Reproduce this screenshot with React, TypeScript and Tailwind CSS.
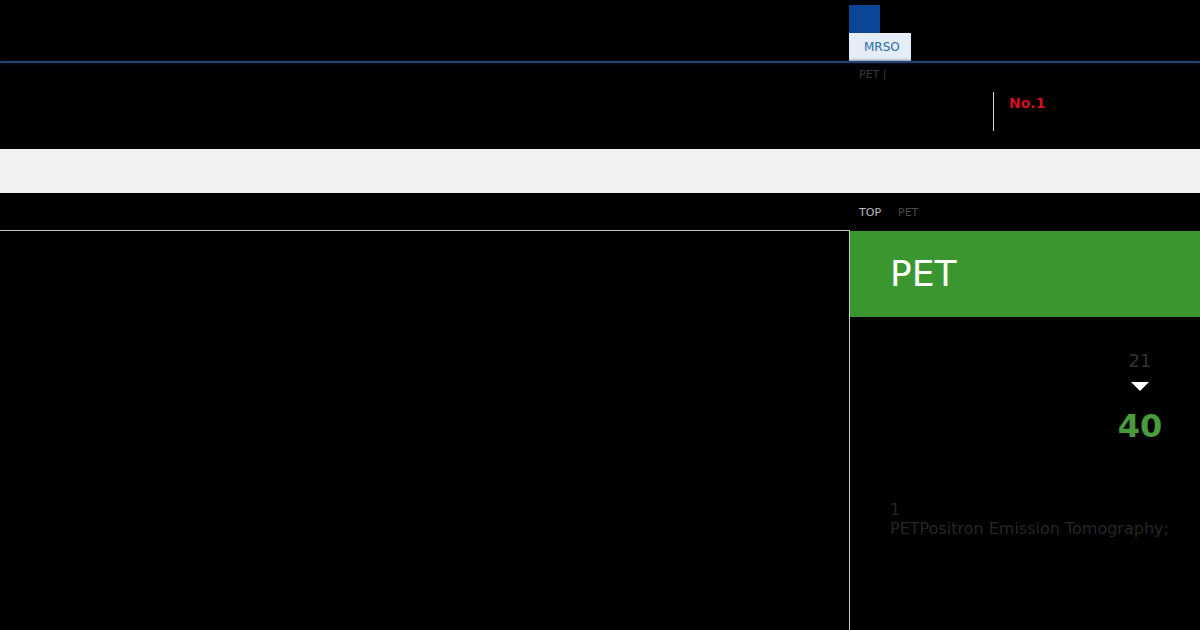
export default function App() {
  return (
    <div className="w-[1200px] h-[630px] bg-black overflow-hidden flex flex-col font-['DejaVu_Sans',sans-serif]">
      {/* top bar */}
      <div className="h-[61px] pl-[849px] pt-[5px] flex flex-col">
        <div className="w-[31px] h-[28px] bg-[#0b4596]" />
        <div className="w-[62px] h-[28px] bg-[#e4ecf5] text-[12px] text-[#2a6fa8] flex items-center pl-[15px]">
          MRSO
        </div>
      </div>
      <div className="h-[2px] bg-[#24426f] shadow-[0_0_3px_#10254a]" />

      {/* title row */}
      <div className="h-[86px] pl-[859px] flex flex-col">
        <div className="mt-[5px] text-[11px] leading-[13px] text-[#3a3a3a]">PET |</div>
        <div className="mt-[11px] ml-[134px] flex items-center">
          <div className="w-px h-[39px] bg-[#d8d8d8]" />
          <div className="ml-[15px] -mt-[16px] text-[14px] font-bold text-[#d0101e]">No.1</div>
        </div>
      </div>

      {/* gray band */}
      <div className="h-[44px] bg-[#f1f1f1]" />

      {/* breadcrumb */}
      <div className="h-[37px] pl-[859px] pt-[4px] flex items-center gap-[17px] text-[11px]">
        <span className="text-[#bdbdbd]">TOP</span>
        <span className="text-[#4a4a4a]">PET</span>
      </div>

      {/* main */}
      <div className="flex flex-1">
        <div className="w-[850px] border-t border-r border-[#c8c8c8]" />
        <div className="flex-1 flex flex-col">
          <div className="mt-px h-[86px] bg-[#3a962f] pl-[40px] flex items-center">
            <span className="text-[36px] text-white leading-none">PET</span>
          </div>
          <div className="flex justify-end pr-[20px]">
            <div className="w-[80px] flex flex-col items-center">
              <span className="mt-[33px] text-[18px] leading-[21px] text-[#333]">21</span>
              <svg width="18" height="9" viewBox="0 0 18 9" className="mt-[11px]">
                <polygon points="0,0 18,0 9,9" fill="#ffffff" />
              </svg>
              <span className="mt-[16px] text-[32px] leading-[38px] font-bold text-[#4a9a3e]">40</span>
            </div>
          </div>
          <div className="pl-[40px] mt-[55px] text-[16px] leading-[19px] text-[#262626]">
            <div>1</div>
            <div>PETPositron Emission Tomography;</div>
          </div>
        </div>
      </div>
    </div>
  );
}
